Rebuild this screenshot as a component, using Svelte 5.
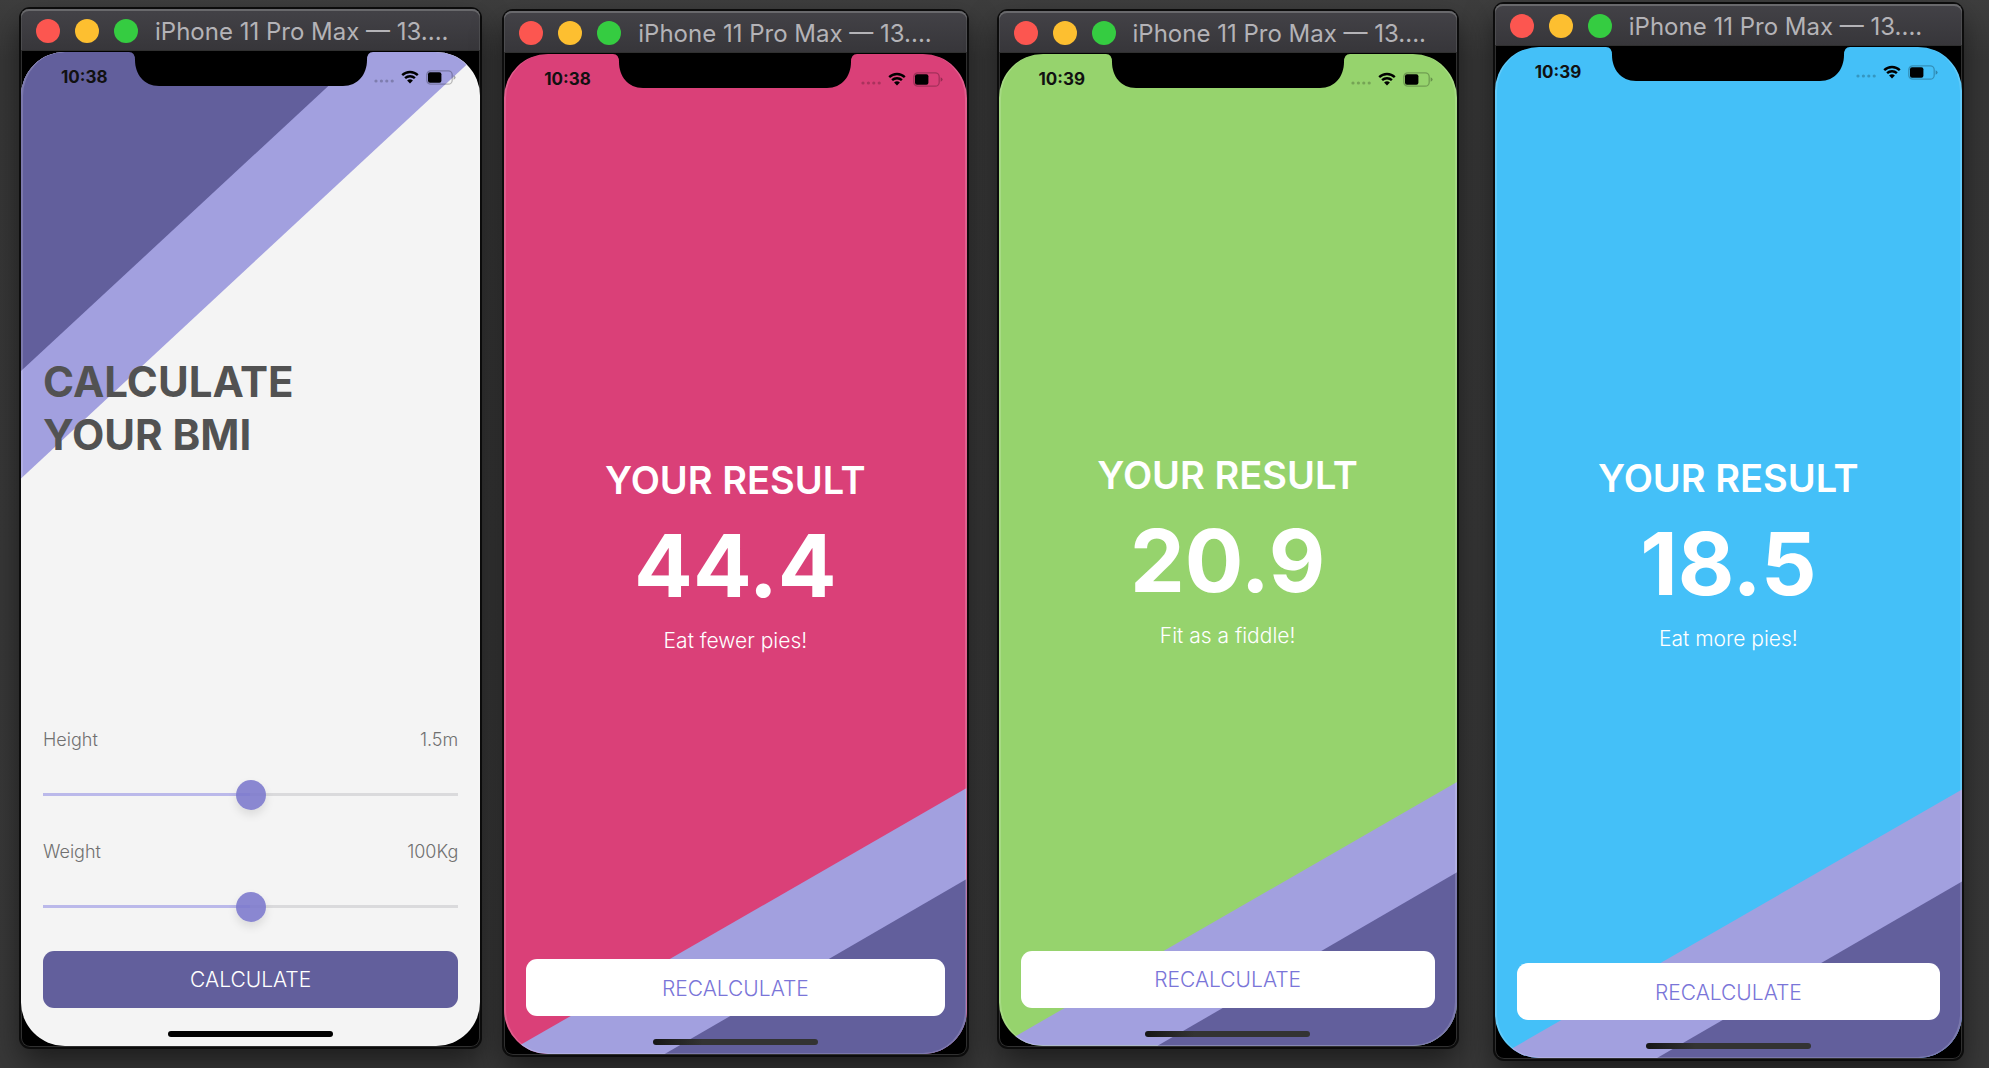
<script>
  let height = $state(1.5);
  let weight = $state(100);

  const phones = [
    { id: 'input', time: '10:38' },
    { id: 'over', time: '10:38', score: '44.4', message: 'Eat fewer pies!' },
    { id: 'fit', time: '10:39', score: '20.9', message: 'Fit as a fiddle!' },
    { id: 'under', time: '10:39', score: '18.5', message: 'Eat more pies!' }
  ];

  let heightFill = $derived((height / 3) * 100);
  let weightFill = $derived((weight / 200) * 100);
</script>

<main class="desktop">
  {#each phones as phone (phone.id)}
    <section class="window {phone.id}">
      <header class="titlebar">
        <div class="lights">
          <button class="light close" aria-label="Close"></button>
          <button class="light minimise" aria-label="Minimise"></button>
          <button class="light zoom" aria-label="Zoom"></button>
        </div>
        <span class="title">iPhone 11 Pro Max — 13....</span>
      </header>

      <div class="bezel">
        <div class="screen">
          <svg class="art" viewBox="0 0 100 100" preserveAspectRatio="none" aria-hidden="true">
            {#if phone.score}
              <path class="band" d="M0 100L100 73.4V100Z" />
              <path class="wedge" d="M34.6 100L100 82.5V100Z" />
            {:else}
              <path class="band" d="M0 0H100L0 42.9Z" />
              <path class="wedge" d="M0 0H74.9L0 32.1Z" />
            {/if}
          </svg>
          <svg class="notch" viewBox="0 0 244 34" aria-hidden="true">
            <path d="M0 0Q6 0 6 8C6 22 15 34 30 34H214C229 34 238 22 238 8Q238 0 244 0Z" />
          </svg>

          <div class="status">
            <span class="time">{phone.time}</span>
            <div class="indicators">
              <svg class="signal" viewBox="0 0 20 14" aria-hidden="true">
                <circle cx="2" cy="11" r="1.6" /><circle cx="7.4" cy="11" r="1.6" />
                <circle cx="12.8" cy="11" r="1.6" /><circle cx="18.2" cy="11" r="1.6" />
              </svg>
              <svg class="wifi" viewBox="0 0 18 14" aria-hidden="true">
                <path d="M1.2 5.1A11.2 11.2 0 0 1 16.8 5.1" />
                <path d="M4.1 8.2A7 7 0 0 1 13.9 8.2" />
                <path class="solid" d="M9 13.6L6.1 10.6A4.2 4.2 0 0 1 11.9 10.6Z" />
              </svg>
              <svg class="battery" viewBox="0 0 30 15" aria-hidden="true">
                <rect class="case" x="0.8" y="0.8" width="25.4" height="13.4" rx="4" />
                <path class="cap" d="M27.6 5.2Q29.6 6 29.6 7.5Q29.6 9 27.6 9.8Z" />
                <rect class="charge" x="2" y="2.3" width="13.4" height="10.4" rx="2" />
              </svg>
            </div>
          </div>

          {#if phone.score}
            <div class="result">
              <h2>YOUR RESULT</h2>
              <p class="score">{phone.score}</p>
              <p class="message">{phone.message}</p>
            </div>
            <button class="action light-action">RECALCULATE</button>
          {:else}
            <h1>CALCULATE<br />YOUR BMI</h1>
            <div class="controls">
              <div class="row">
                <label for="height">Height</label>
                <output for="height">{height}m</output>
              </div>
              <input id="height" type="range" min="0" max="3" step="0.1" bind:value={height} style:--fill="{heightFill}%" />
              <div class="row">
                <label for="weight">Weight</label>
                <output for="weight">{weight}Kg</output>
              </div>
              <input id="weight" type="range" min="0" max="200" bind:value={weight} style:--fill="{weightFill}%" />
            </div>
            <button class="action">CALCULATE</button>
          {/if}

          <div class="home"><span></span></div>
        </div>
      </div>
    </section>
  {/each}
</main>

<style>
  :global(body) {
    margin: 0;
    background: #383838;
  }

  .desktop {
    box-sizing: border-box;
    display: flex;
    align-items: flex-start;
    min-height: 100vh;
    padding: 0 27px 0 21px;
    overflow: hidden;
    background: linear-gradient(#3e3e3e, #363636 60px, #383838);
    font-family: Inter, 'Liberation Sans', sans-serif;
  }

  .window {
    flex: 459 1 0;
    min-width: 0;
    margin-top: 9px;
    border-radius: 9px;
    background: #000;
    box-shadow: 0 0 0 2px #0c0c0c, 0 14px 30px rgba(0, 0, 0, 0.5);
  }
  .over { flex-grow: 462; margin: 11px 0 0 24px; }
  .fit { flex-grow: 458; margin: 11px 0 0 32px; }
  .under { flex-grow: 467; margin: 4px 0 0 38px; }

  .titlebar {
    box-sizing: border-box;
    display: flex;
    align-items: center;
    gap: 17px;
    height: 41px;
    padding: 2px 15px 0;
    border-radius: 8px 8px 0 0;
    background: linear-gradient(#434247, #37363a);
    box-shadow: inset 0 2px 0 #69696c, inset 1px 0 0 #4d4d50, inset -1px 0 0 #4d4d50;
  }
  .lights {
    display: flex;
    flex: none;
    gap: 15px;
  }
  .light {
    width: 24px;
    height: 24px;
    padding: 0;
    border: 0;
    border-radius: 50%;
  }
  .close { background: #fc5650; }
  .minimise { background: #fdbf30; }
  .zoom { background: #35cc41; }
  .title {
    padding-top: 2px;
    overflow: hidden;
    color: #b4b3b7;
    font-size: 24px;
    line-height: 32px;
    white-space: nowrap;
  }

  .bezel {
    padding: 2px 0 1px;
    border-radius: 0 0 9px 9px;
    box-shadow: inset 0 0 0 1px #303030;
  }
  .screen {
    position: relative;
    box-sizing: border-box;
    display: flex;
    flex-direction: column;
    aspect-ratio: 414 / 896;
    padding: 0 22px;
    overflow: hidden;
    border-radius: 44px;
    background: #f4f4f4;
  }
  .screen::after {
    position: absolute;
    inset: 0;
    border: solid rgba(255, 255, 255, 0.16);
    border-width: 0 2px 1px;
    border-radius: 44px;
    content: '';
    pointer-events: none;
  }
  .over .screen { background: #da4078; }
  .fit .screen { background: #96d36d; }
  .under .screen { background: #44c0f8; }

  .art {
    position: absolute;
    inset: 0;
    width: 100%;
    height: 100%;
  }
  .band { fill: #a2a0df; }
  .wedge { fill: #625f9c; }
  .notch {
    position: absolute;
    top: 0;
    left: 50%;
    width: 244px;
    height: 34px;
    margin-left: -122px;
  }

  .status,
  h1,
  .controls,
  .result,
  .action,
  .home {
    position: relative;
  }
  .status {
    display: flex;
    flex: none;
    align-items: center;
    justify-content: space-between;
    height: 50px;
    padding: 0 2px 0 18px;
  }
  .time {
    color: #111;
    font-size: 17px;
    font-weight: 700;
    line-height: 24px;
  }
  .indicators {
    display: flex;
    align-items: center;
    gap: 7px;
  }
  .signal {
    width: 20px;
    height: 14px;
    opacity: 0.22;
  }
  .wifi {
    width: 18px;
    height: 14px;
    fill: none;
    stroke: #000;
    stroke-width: 2.4;
  }
  .wifi .solid {
    fill: #000;
    stroke: none;
  }
  .battery {
    width: 30px;
    height: 15px;
  }
  .case {
    fill: none;
    stroke: #000;
    stroke-width: 1.3;
    opacity: 0.25;
  }
  .cap { opacity: 0.3; }

  h1 {
    margin: auto 0;
    padding-top: 2px;
    color: #525252;
    font-size: 42px;
    font-weight: 700;
    line-height: 53px;
  }
  .row {
    display: flex;
    align-items: center;
    justify-content: space-between;
    height: 56px;
    color: #707070;
    font-size: 18px;
    font-weight: 300;
  }

  input {
    display: block;
    width: 100%;
    height: 54px;
    margin: 0 0 2px;
    appearance: none;
    background: linear-gradient(90deg, #bbb9ea var(--fill), #dadadc var(--fill)) center / 100% 3px no-repeat;
  }
  input::-webkit-slider-thumb {
    width: 30px;
    height: 30px;
    border-radius: 50%;
    appearance: none;
    background: rgba(123, 120, 204, 0.88);
    box-shadow: 0 5px 10px rgba(0, 0, 0, 0.1);
  }

  .result {
    display: flex;
    flex: 1;
    flex-direction: column;
    align-items: center;
    justify-content: center;
    padding-top: 48px;
    color: #fff;
  }
  h2 {
    margin: 0;
    font-size: 38px;
    font-weight: 600;
    line-height: 46px;
  }
  p { margin: 0; }
  .score {
    padding: 13px 0 11px;
    font-size: 87px;
    font-weight: 700;
    line-height: 100px;
  }
  .message {
    font-size: 21px;
    font-weight: 300;
    line-height: 28px;
  }

  .action {
    flex: none;
    height: 57px;
    margin-top: 15px;
    padding: 1px 0 0;
    border: 0;
    border-radius: 11px;
    background: #625f9c;
    color: #fff;
    font-family: inherit;
    font-size: 21px;
    font-weight: 300;
  }
  .light-action {
    margin-top: 0;
    background: #fff;
    color: #7a75d8;
  }
  .home {
    display: flex;
    flex: none;
    align-items: center;
    justify-content: center;
    height: 24px;
    padding-top: 14px;
  }
  .home span {
    width: 165px;
    height: 6px;
    border-radius: 3px;
    background: #000;
  }
  .over .home span,
  .fit .home span,
  .under .home span {
    background: linear-gradient(90deg, #161616, #333 30%);
  }
</style>
